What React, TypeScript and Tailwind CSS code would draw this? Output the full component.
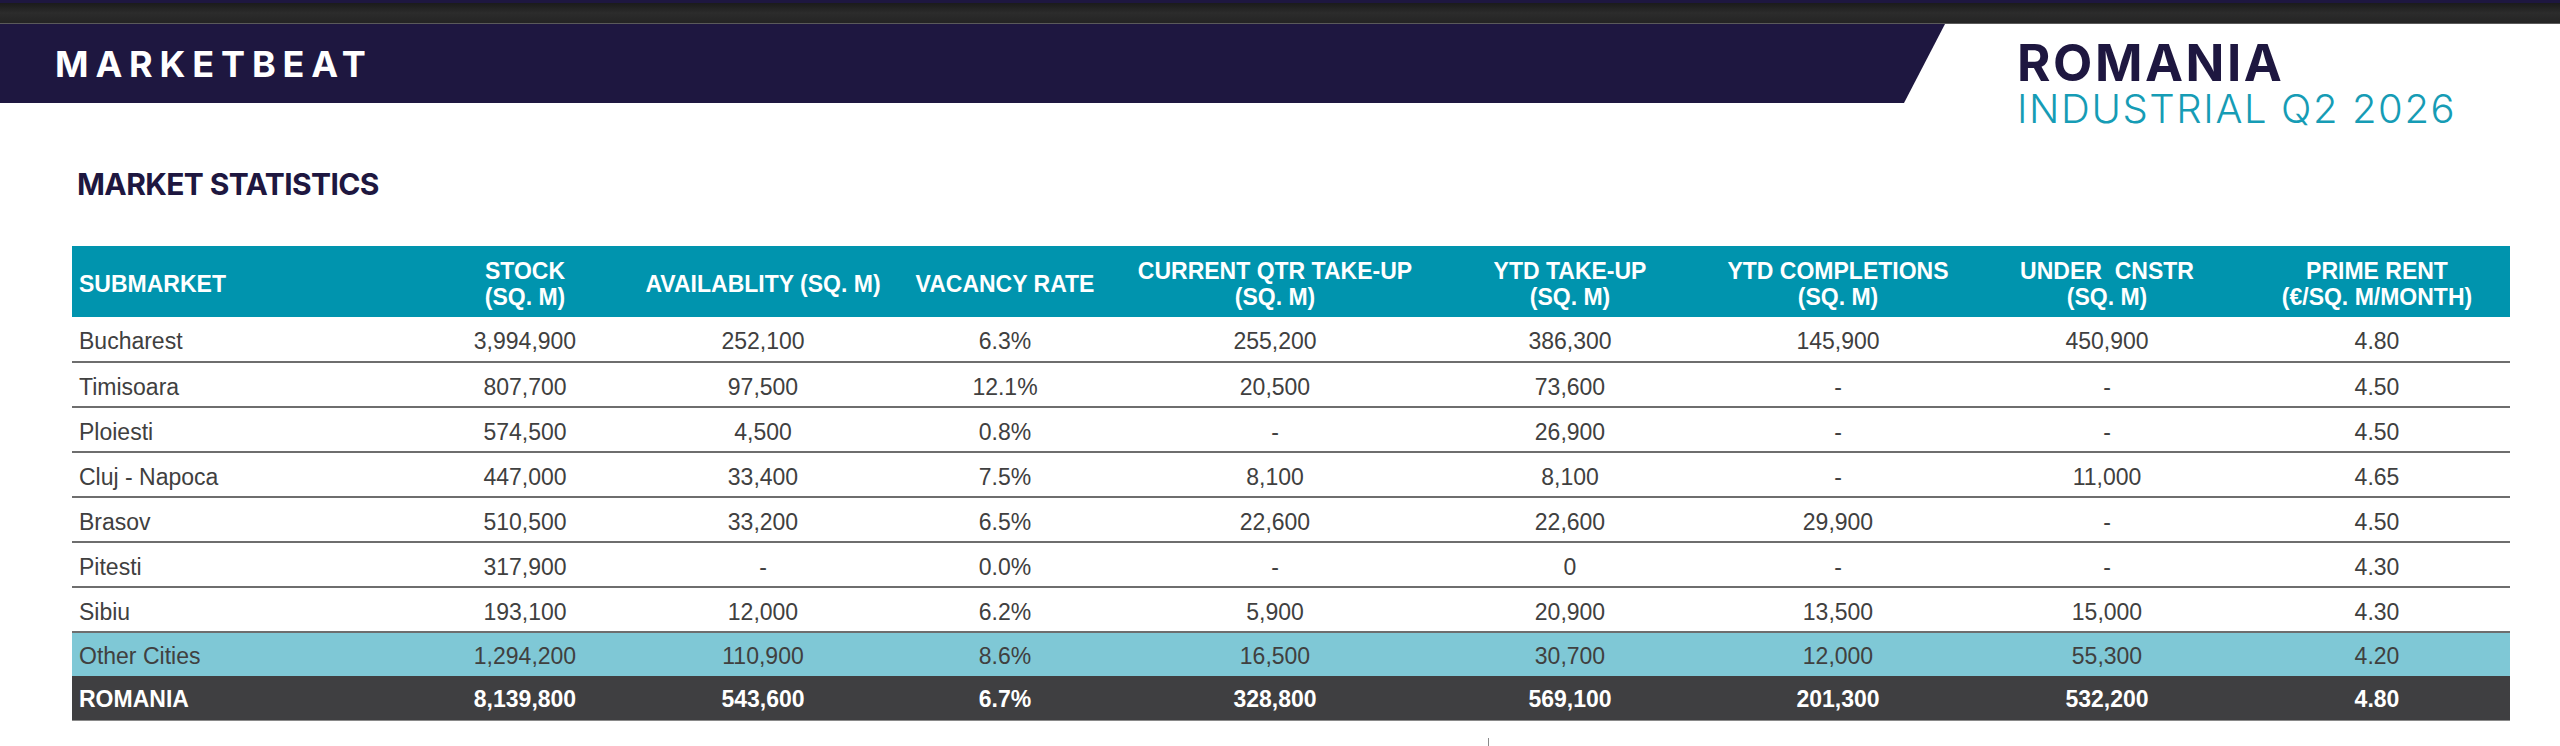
import React from 'react';

type Row = {
  name: string;
  values: string[];
};

const columns = [
  { key: 'submarket', width: 'w-[346px]', label: ['SUBMARKET'] },
  { key: 'stock', width: 'w-[214px]', label: ['STOCK', '(SQ. M)'] },
  { key: 'avail', width: 'w-[262px]', label: ['AVAILABLITY (SQ. M)'] },
  { key: 'vacancy', width: 'w-[222px]', label: ['VACANCY RATE'] },
  { key: 'qtr', width: 'w-[318px]', label: ['CURRENT QTR TAKE-UP', '(SQ. M)'] },
  { key: 'ytd', width: 'w-[272px]', label: ['YTD TAKE-UP', '(SQ. M)'] },
  { key: 'comp', width: 'w-[264px]', label: ['YTD COMPLETIONS', '(SQ. M)'] },
  { key: 'cnstr', width: 'w-[274px]', label: ['UNDER\u00a0 CNSTR', '(SQ. M)'] },
  { key: 'rent', width: 'w-[266px]', label: ['PRIME RENT', '(€/SQ. M/MONTH)'] },
];

const rows: Row[] = [
  { name: 'Bucharest', values: ['3,994,900', '252,100', '6.3%', '255,200', '386,300', '145,900', '450,900', '4.80'] },
  { name: 'Timisoara', values: ['807,700', '97,500', '12.1%', '20,500', '73,600', '-', '-', '4.50'] },
  { name: 'Ploiesti', values: ['574,500', '4,500', '0.8%', '-', '26,900', '-', '-', '4.50'] },
  { name: 'Cluj - Napoca', values: ['447,000', '33,400', '7.5%', '8,100', '8,100', '-', '11,000', '4.65'] },
  { name: 'Brasov', values: ['510,500', '33,200', '6.5%', '22,600', '22,600', '29,900', '-', '4.50'] },
  { name: 'Pitesti', values: ['317,900', '-', '0.0%', '-', '0', '-', '-', '4.30'] },
  { name: 'Sibiu', values: ['193,100', '12,000', '6.2%', '5,900', '20,900', '13,500', '15,000', '4.30'] },
];

const otherCities: Row = {
  name: 'Other Cities',
  values: ['1,294,200', '110,900', '8.6%', '16,500', '30,700', '12,000', '55,300', '4.20'],
};

const total: Row = {
  name: 'ROMANIA',
  values: ['8,139,800', '543,600', '6.7%', '328,800', '569,100', '201,300', '532,200', '4.80'],
};

export default function App() {
  return (
    <div className="h-[746px] w-[2560px] overflow-hidden bg-white">
      {/* top strip */}
      <div className="h-[24px] border-t-[3px] border-[#1e1740] border-b border-b-[#5a5a5a] bg-gradient-to-b from-[#1b1b1b] via-[#2c2c2c] to-[#242424]" />

      {/* banner */}
      <div className="flex h-[79px]">
        <div className="flex w-[1945px] items-center bg-[#1e1740] pl-[55px] [clip-path:polygon(0_0,100%_0,calc(100%-41px)_100%,0_100%)]">
          <span className="font-['Inter',sans-serif] text-[36px] font-bold leading-none tracking-[0.19em] text-white">
            MARKETBEAT
          </span>
        </div>
        <div className="flex flex-col pl-[72px] pt-[17px] font-['Inter',sans-serif]">
          <span className="text-[51px] font-bold leading-[44px] tracking-[0.05em] text-[#1e1740]">ROMANIA</span>
          <span className="mt-[5px] whitespace-nowrap text-[40px] font-light leading-[38px] tracking-[0.04em] text-[#169cb5]">
            INDUSTRIAL Q2 2026
          </span>
        </div>
      </div>

      <h2 className="ml-[77px] mt-[66px] font-['Inter',sans-serif] text-[30px] font-bold leading-none tracking-[-0.02em] text-[#1e1740]">
        MARKET STATISTICS
      </h2>

      {/* table */}
      <table className="ml-[72px] mt-[47px] w-[2438px] table-fixed font-['Liberation_Sans',Arial,sans-serif]">
        <colgroup>
          {columns.map(c => (
            <col key={c.key} className={c.width} />
          ))}
        </colgroup>
        <thead>
          <tr className="h-[71px] bg-[#0094ae] text-[23px] font-bold leading-[26px] text-white">
            {columns.map((c, i) => (
              <th key={c.key} className={`pt-[4px] align-middle font-bold ${i === 0 ? 'pl-[7px] text-left' : 'text-center'}`}>
                {c.label.map(line => (
                  <div key={line} className="whitespace-nowrap">{line}</div>
                ))}
              </th>
            ))}
          </tr>
        </thead>
        <tbody className="text-[23px] leading-tight text-[#404040]">
          {rows.map(row => (
            <tr key={row.name} className="h-[45px]">
              <td className="border-b-2 border-[#6e6e6e] pl-[7px] pt-[5px] text-left">{row.name}</td>
              {row.values.map((v, i) => (
                <td key={i} className="border-b-2 border-[#6e6e6e] pt-[5px] text-center">{v}</td>
              ))}
            </tr>
          ))}
          <tr className="h-[44px] bg-[#7fc8d6]">
            <td className="pl-[7px] pt-[4px] text-left">{otherCities.name}</td>
            {otherCities.values.map((v, i) => (
              <td key={i} className="pt-[4px] text-center">{v}</td>
            ))}
          </tr>
          <tr className="h-[44px] bg-[#3f3f41] font-bold text-white">
            <td className="border-b border-[#8a8a8a] pl-[7px] pt-[3px] text-left">{total.name}</td>
            {total.values.map((v, i) => (
              <td key={i} className="border-b border-[#8a8a8a] pt-[3px] text-center">{v}</td>
            ))}
          </tr>
        </tbody>
      </table>

      <div className="ml-[1488px] mt-[17px] h-[10px] w-px bg-[#8a8a8a]" />
    </div>
  );
}
